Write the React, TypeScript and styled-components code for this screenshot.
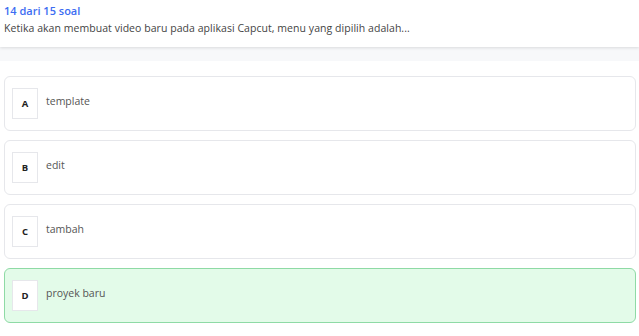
import React from "react";
import styled, {createGlobalStyle} from "styled-components";

const GlobalStyle = createGlobalStyle`
    body {
        margin: 0;
        background: #ffffff;
        font-family: "Open Sans", "Liberation Sans", sans-serif;
    }
`

type OptionType = {
    letter: string
    text: string
    selected?: boolean
}

const options: OptionType[] = [
    {letter: 'A', text: 'template'},
    {letter: 'B', text: 'edit'},
    {letter: 'C', text: 'tambah'},
    {letter: 'D', text: 'proyek baru', selected: true},
]

export default function App() {
    return (
        <Page>
            <GlobalStyle/>
            <Header>
                <Counter>14 dari 15 soal</Counter>
                <Question>Ketika akan membuat video baru pada aplikasi Capcut, menu yang dipilih adalah...</Question>
            </Header>
            <Band/>
            <OptionList>
                {options.map(o => (
                    <OptionCard key={o.letter} $selected={o.selected}>
                        <Letter>{o.letter}</Letter>
                        <OptionText>{o.text}</OptionText>
                    </OptionCard>
                ))}
            </OptionList>
        </Page>
    )
}

const Page = styled.div`
    width: 639px;
    min-height: 336px;
    background: #ffffff;
`

const Header = styled.div`
    height: 47px;
    padding: 3px 4px 0;
    box-sizing: border-box;
    background: #ffffff;
    box-shadow: 0 1px 3px rgba(0, 0, 0, 0.12);
    position: relative;
    z-index: 1;
`

const Counter = styled.div`
    color: #3d6df2;
    font-size: 11px;
    font-weight: 600;
    line-height: 15px;
`

const Question = styled.div`
    margin-top: 3px;
    color: #444;
    font-size: 10.5px;
    line-height: 14px;
    letter-spacing: 0.05px;
`

const Band = styled.div`
    height: 14px;
    background: #f7f8fa;
`

const OptionList = styled.div`
    display: flex;
    flex-direction: column;
    gap: 9px;
    padding: 15px 3px 0 4px;
`

const OptionCard = styled.div<{ $selected?: boolean }>`
    height: 55px;
    box-sizing: border-box;
    display: flex;
    align-items: center;
    gap: 8px;
    padding: 0 7px;
    border-radius: 6px;
    border: 1px solid ${p => p.$selected ? '#8edaa5' : '#e6e7eb'};
    background: ${p => p.$selected ? '#e3fbe9' : '#ffffff'};
`

const Letter = styled.div`
    width: 26px;
    height: 31px;
    box-sizing: border-box;
    display: flex;
    align-items: center;
    justify-content: center;
    border: 1px solid #e6e7eb;
    background: #ffffff;
    font-size: 9.5px;
    font-weight: 700;
    color: #222;
`

const OptionText = styled.div`
    font-size: 10.5px;
    color: #555;
    margin-top: -5px;
`
